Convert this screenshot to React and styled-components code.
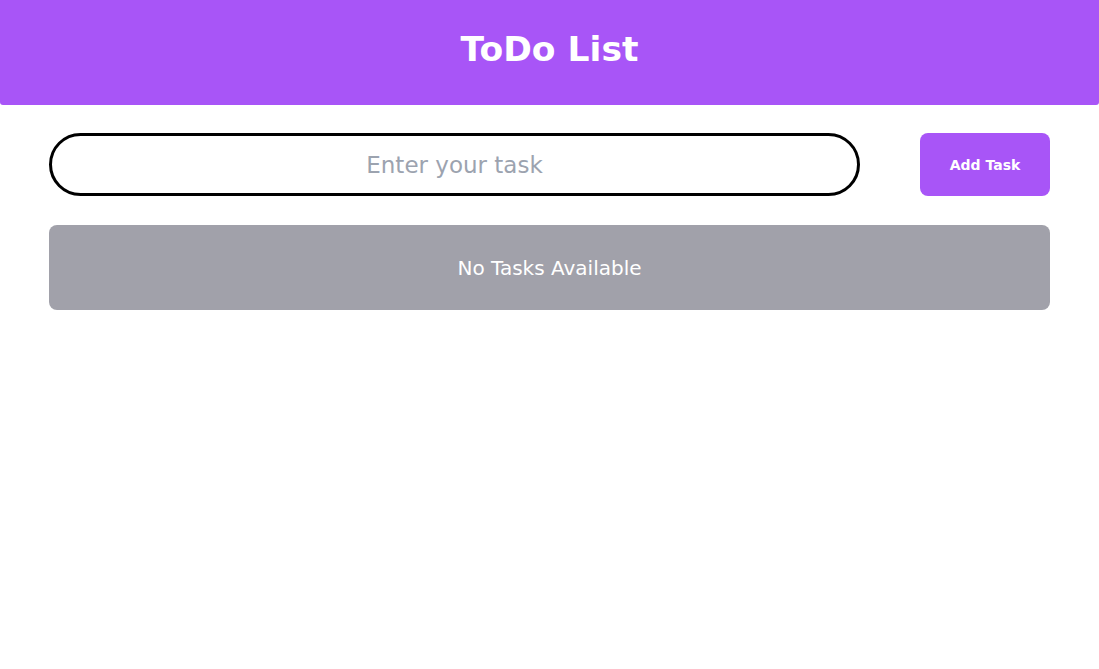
import React, {useState} from 'react'
import styled, {createGlobalStyle} from 'styled-components'

const GlobalStyle = createGlobalStyle`
    body {
        margin: 0;
        padding: 0;
        background: #fff;
        font-family: "DejaVu Sans", Verdana, sans-serif;
    }
`
const Header = styled.header`
    background: #a855f7;
    height: 105px;
    display: flex;
    align-items: center;
    justify-content: center;
    border-radius: 0 0 3px 3px;
`
const Title = styled.h1`
    margin: 0;
    color: #fff;
    font-size: 34.5px;
    font-weight: bold;
    padding-bottom: 8px;
`
const Main = styled.main`
    width: 1001px;
    margin: 28px auto 0;
    display: flex;
    flex-direction: column;
    gap: 29px;
`
const Form = styled.form`
    display: flex;
    align-items: center;
    gap: 60px;
`
const Input = styled.input`
    flex: 1;
    height: 63px;
    box-sizing: border-box;
    border: 3px solid #000;
    border-radius: 9999px;
    font-family: inherit;
    font-size: 23px;
    text-align: center;
    outline: none;
    padding: 0 16px;

    &::placeholder {
        color: #9ca3af;
    }
`
const Button = styled.button`
    width: 130px;
    height: 63px;
    background: #a855f7;
    color: #fff;
    border: none;
    border-radius: 8px;
    font-family: inherit;
    font-weight: bold;
    font-size: 14px;
    padding-top: 2px;
    cursor: pointer;
`
const Empty = styled.div`
    background: #a1a1aa;
    height: 85px;
    border-radius: 8px;
    color: #fff;
    font-size: 20px;
    display: flex;
    align-items: center;
    justify-content: center;
`
const TaskItem = styled.div`
    background: #f3e8ff;
    padding: 16px;
    border-radius: 8px;
`

const App = () => {
    const [task, setTask] = useState('')
    const [tasks, setTasks] = useState([])

    const addTask = (e) => {
        e.preventDefault()
        if (!task.trim()) return
        setTasks([...tasks, task])
        setTask('')
    }

    return (
        <>
            <GlobalStyle />
            <Header>
                <Title>ToDo List</Title>
            </Header>
            <Main>
                <Form onSubmit={addTask}>
                    <Input
                        placeholder="Enter your task"
                        value={task}
                        onChange={e => setTask(e.target.value)}
                    />
                    <Button type="submit">Add Task</Button>
                </Form>
                {
                    tasks.length === 0
                        ? <Empty>No Tasks Available</Empty>
                        : tasks.map((t, i) => <TaskItem key={i}>{t}</TaskItem>)
                }
            </Main>
        </>
    )
}

export default App
